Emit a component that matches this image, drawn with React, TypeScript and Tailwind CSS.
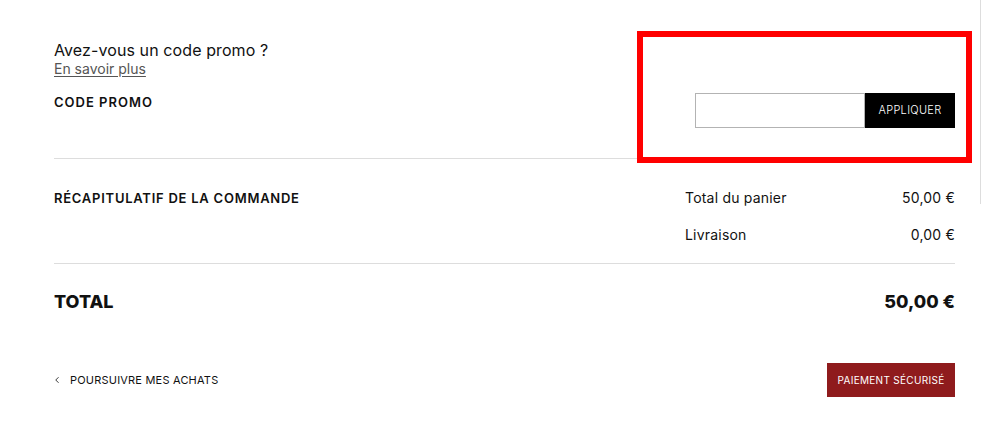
import { ChevronLeft } from "lucide-react";

const font = { fontFamily: "Inter, 'Liberation Sans', sans-serif" };

export default function App() {
  return (
    <div className="relative w-[981px] h-[429px] bg-white text-[#111]" style={font}>
      {/* light vertical edge on the right */}
      <div className="absolute right-0 top-0 h-[204px] w-px bg-[#ddd]" />

      <div className="pl-[54px] pr-[26px]">
        {/* promo code */}
        <div className="flex justify-between h-[159px] border-b border-[#ddd]">
          <div className="pt-[40px]">
            <p className="text-[16px] leading-[20px] tracking-[0.1px]">Avez-vous un code promo ?</p>
            <a href="#" className="block text-[14px] leading-[18px] text-[#555] underline underline-offset-2">
              En savoir plus
            </a>
            <p className="mt-[16px] text-[13px] leading-[16px] font-semibold tracking-[1px]">CODE PROMO</p>
          </div>
          <div className="pt-[93px] flex">
            <input className="w-[170px] h-[35px] border border-[#b3b3b3] outline-none" />
            <button className="w-[90px] h-[35px] bg-black text-white text-[11px] font-light tracking-[0.3px]">
              APPLIQUER
            </button>
          </div>
        </div>

        {/* summary */}
        <div className="flex justify-between h-[105px] border-b border-[#ddd] pt-[29px]">
          <p className="text-[13px] leading-[20px] font-semibold tracking-[0.75px]">RÉCAPITULATIF DE LA COMMANDE</p>
          <div className="w-[270px] flex flex-col gap-[17px] text-[14px] leading-[20px] tracking-[0.2px]">
            <div className="flex justify-between">
              <span>Total du panier</span>
              <span>50,00 €</span>
            </div>
            <div className="flex justify-between">
              <span>Livraison</span>
              <span>0,00 €</span>
            </div>
          </div>
        </div>

        {/* total */}
        <div className="flex justify-between pt-[26px] text-[18px] leading-[24px] font-extrabold">
          <span>TOTAL</span>
          <span>50,00 €</span>
        </div>

        {/* actions */}
        <div className="flex justify-between items-center mt-[49px]">
          <a href="#" className="flex items-center text-[11px] tracking-[0.2px]">
            <ChevronLeft className="w-[10px] h-[10px] ml-[-2px] mr-[8px]" strokeWidth={2} />
            POURSUIVRE MES ACHATS
          </a>
          <button className="w-[128px] h-[34px] bg-[#8f1b1d] text-white text-[10px] tracking-[0.3px]">
            PAIEMENT SÉCURISÉ
          </button>
        </div>
      </div>

      {/* red highlight annotation */}
      <div className="absolute left-[637px] top-[31px] w-[335px] h-[132px] border-[6px] border-[#ff0000]" />
    </div>
  );
}
